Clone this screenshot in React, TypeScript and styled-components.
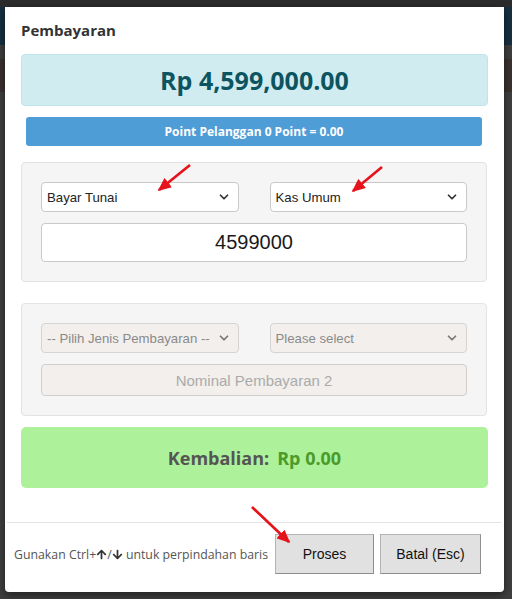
import styled, { createGlobalStyle } from "styled-components";
import { FaArrowUp, FaArrowDown } from "react-icons/fa";
import { ChevronDown } from "lucide-react";

const GlobalStyle = createGlobalStyle`
  html, body {
    margin: 0;
    padding: 0;
    background: #3d3d3d;
  }
  * {
    box-sizing: border-box;
  }
`;

interface SelectFieldProps {
  value: string;
  disabled?: boolean;
}

const SelectField = ({ value, disabled }: SelectFieldProps) => (
  <SelectWrap>
    <Select disabled={disabled} defaultValue={value}>
      <option value={value}>{value}</option>
    </Select>
    <Chevron $disabled={disabled}>
      <ChevronDown size={14} strokeWidth={3} />
    </Chevron>
  </SelectWrap>
);

const App = () => {
  return (
    <>
      <GlobalStyle />
      <Backdrop>
        <Modal>
          <ModalHeader>
            <ModalTitle>Pembayaran</ModalTitle>
          </ModalHeader>
          <ModalBody>
            <TotalBox>Rp 4,599,000.00</TotalBox>
            <PointBar>Point Pelanggan 0 Point = 0.00</PointBar>

            <Panel>
              <SelectRow>
                <SelectField value="Bayar Tunai" />
                <SelectField value="Kas Umum" />
              </SelectRow>
              <AmountInput defaultValue="4599000" $big />
            </Panel>

            <Panel $gapTop>
              <SelectRow>
                <SelectField value="-- Pilih Jenis Pembayaran --" disabled />
                <SelectField value="Please select" disabled />
              </SelectRow>
              <AmountInput placeholder="Nominal Pembayaran 2" disabled />
            </Panel>

            <ChangeBox>
              <ChangeLabel>Kembalian:</ChangeLabel>
              <ChangeValue>Rp 0.00</ChangeValue>
            </ChangeBox>
          </ModalBody>
          <ModalFooter>
            <Hint>
              Gunakan Ctrl+
              <FaArrowUp size={11} />/<FaArrowDown size={11} /> untuk
              perpindahan baris
            </Hint>
            <FooterBtn>Proses</FooterBtn>
            <FooterBtn $wide>Batal (Esc)</FooterBtn>
          </ModalFooter>
        </Modal>

        {/* red annotation arrows drawn over the screenshot */}
        <Annotations viewBox="0 0 512 599" width={512} height={599}>
          <defs>
            <marker
              id="head"
              markerWidth="5"
              markerHeight="4.4"
              refX="4.4"
              refY="2.2"
              orient="auto"
            >
              <path d="M0,0 L5,2.2 L0,4.4 Z" fill="#e5141b" />
            </marker>
          </defs>
          <line x1="190" y1="165" x2="159" y2="190" stroke="#e5141b" strokeWidth="2.7" markerEnd="url(#head)" />
          <line x1="382" y1="167" x2="353" y2="191" stroke="#e5141b" strokeWidth="2.7" markerEnd="url(#head)" />
          <line x1="252" y1="507" x2="289" y2="542" stroke="#e5141b" strokeWidth="2.7" markerEnd="url(#head)" />
        </Annotations>
      </Backdrop>
    </>
  );
};

export default App;

// ─── Styled Components ───────────────────────────────────────
const Backdrop = styled.div`
  position: relative;
  min-height: 599px;
  padding: 7px 0 0 5px;
  background: linear-gradient(
    to bottom,
    #2c2c2c 0px,
    #2c2c2c 7px,
    #17303f 7px,
    #17303f 45px,
    #3e3e3e 45px,
    #3e3e3e 59px,
    #3b3230 59px,
    #3b3230 92px,
    #3f3f3f 92px
  );
`;

const Modal = styled.div`
  width: 499px;
  background: #fff;
  border-radius: 0 0 4px 4px;
  box-shadow: 0 3px 9px rgba(0, 0, 0, 0.5);
  font-family: "Open Sans", "Noto Sans", sans-serif;
`;

const ModalHeader = styled.div`
  padding: 14px 16px 0;
`;

const ModalTitle = styled.h4`
  margin: 0;
  font-size: 15px;
  line-height: 18px;
  font-weight: 700;
  color: #333;
`;

const ModalBody = styled.div`
  padding: 15px 16px 34px;
`;

const TotalBox = styled.div`
  height: 52px;
  display: flex;
  align-items: center;
  justify-content: center;
  background: #d1ecf1;
  border: 1px solid #bee5eb;
  border-radius: 4px;
  color: #0c5460;
  font-size: 25px;
  font-weight: 700;
`;

const PointBar = styled.div`
  height: 29px;
  margin: 11px 6px 16px 5px;
  display: flex;
  align-items: center;
  justify-content: center;
  background: #4f9dd6;
  border-radius: 3px;
  color: #fff;
  font-size: 12px;
  font-weight: 700;
`;

const Panel = styled.div<{ $gapTop?: boolean }>`
  margin-top: ${({ $gapTop }) => ($gapTop ? "21px" : "0")};
  margin-right: 1px;
  padding: 19px;
  background: #f5f5f5;
  border: 1px solid #e3e3e3;
  border-radius: 4px;
  display: flex;
  flex-direction: column;
  gap: 11px;
`;

const SelectRow = styled.div`
  display: grid;
  grid-template-columns: 1fr 1fr;
  gap: 31px;
`;

const SelectWrap = styled.div`
  position: relative;
`;

const Select = styled.select`
  appearance: none;
  width: 100%;
  height: 30px;
  padding: 0 24px 0 5px;
  border: 1px solid #c9c9c9;
  border-radius: 4px;
  background: #fff;
  color: #222;
  font-family: "Liberation Sans", Arial, sans-serif;
  font-size: 13.2px;
  outline: none;

  &:disabled {
    background: #f2efed;
    color: #8a8a8a;
    border-color: #d6d3d1;
    opacity: 1;
  }
`;

const Chevron = styled.span<{ $disabled?: boolean }>`
  position: absolute;
  right: 8px;
  top: 8px;
  display: flex;
  color: ${({ $disabled }) => ($disabled ? "#777" : "#333")};
  pointer-events: none;
`;

const AmountInput = styled.input<{ $big?: boolean }>`
  width: 100%;
  height: ${({ $big }) => ($big ? "39px" : "32px")};
  border: 1px solid #c9c9c9;
  border-radius: 4px;
  background: #fff;
  text-align: center;
  color: #1a1a1a;
  font-family: "Liberation Sans", Arial, sans-serif;
  font-size: ${({ $big }) => ($big ? "20px" : "15px")};
  outline: none;

  &::placeholder {
    color: #ababab;
  }

  &:disabled {
    background: #f2efed;
    border-color: #d0cdcb;
  }
`;

const ChangeBox = styled.div`
  margin-top: 11px;
  height: 61px;
  display: flex;
  align-items: center;
  justify-content: center;
  gap: 8px;
  background: #adf29a;
  border-radius: 5px;
  font-size: 18px;
  font-weight: 700;
`;

const ChangeLabel = styled.span`
  color: #555;
`;

const ChangeValue = styled.span`
  color: #4c9a2a;
`;

const ModalFooter = styled.div`
  margin: 0 3px 0 2px;
  padding: 11px 20px 18px 7px;
  border-top: 1px solid #e3e3e3;
  display: flex;
  align-items: center;
  justify-content: flex-end;
  gap: 6px;
`;

const Hint = styled.span`
  flex: 1;
  font-size: 12.3px;
  color: #555;
  white-space: nowrap;

  svg {
    vertical-align: -1px;
    color: #333;
  }
`;

const FooterBtn = styled.button<{ $wide?: boolean }>`
  width: ${({ $wide }) => ($wide ? "101px" : "99px")};
  height: 40px;
  background: #e1e1e1;
  border: 1px solid #b4b4b4;
  border-right-color: #8e8e8e;
  border-bottom-color: #8e8e8e;
  border-radius: 0;
  color: #111;
  font-family: "Liberation Sans", Arial, sans-serif;
  font-size: 14px;
  cursor: pointer;
`;

const Annotations = styled.svg`
  position: absolute;
  left: 0;
  top: 0;
  pointer-events: none;
`;
